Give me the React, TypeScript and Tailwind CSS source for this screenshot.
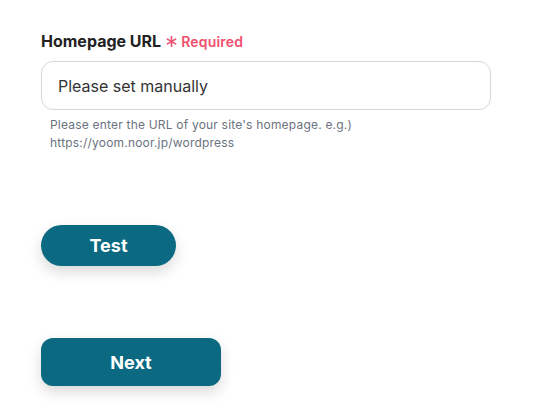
export default function App() {
  return (
    <div className="w-[537px] h-[416px] bg-white pl-[41px] pt-[31px]" style={{ fontFamily: "Inter, 'Noto Sans', sans-serif" }}>
      <div className="flex items-center h-[20px]">
        <span className="text-[16px] font-bold text-[#222]">Homepage URL</span>
        <svg width="11" height="11" viewBox="0 0 12 12" className="ml-[5px] mr-[4px] mt-[1px]" stroke="#f0506e" strokeWidth="1.8" strokeLinecap="round">
          <line x1="6" y1="0.8" x2="6" y2="11.2" />
          <line x1="1.5" y1="3.4" x2="10.5" y2="8.6" />
          <line x1="1.5" y1="8.6" x2="10.5" y2="3.4" />
        </svg>
        <span className="text-[14px] font-semibold text-[#f0506e] tracking-[0.2px]">Required</span>
      </div>
      <div className="mt-[10px] w-[450px] h-[49px] rounded-[12px] border border-[#d5d7dc] flex items-center pl-[16px]">
        <span className="text-[16px] text-[#333]">Please set manually</span>
      </div>
      <div className="mt-[6px] pl-[9px] text-[12px] leading-[18px] text-[#6b7280] tracking-[0.2px]">
        <div>Please enter the URL of your site's homepage. e.g.)</div>
        <div>https://yoom.noor.jp/wordpress</div>
      </div>
      <div className="mt-[73px]">
        <button className="w-[135px] h-[41px] rounded-full bg-[#0b6982] text-white text-[18px] font-bold shadow-[0_6px_14px_rgba(0,0,0,0.15)]">
          Test
        </button>
      </div>
      <div className="mt-[72px]">
        <button className="w-[180px] h-[48px] rounded-[12px] bg-[#0b6982] text-white text-[18px] font-bold shadow-[0_6px_14px_rgba(0,0,0,0.15)]">
          Next
        </button>
      </div>
    </div>
  );
}
